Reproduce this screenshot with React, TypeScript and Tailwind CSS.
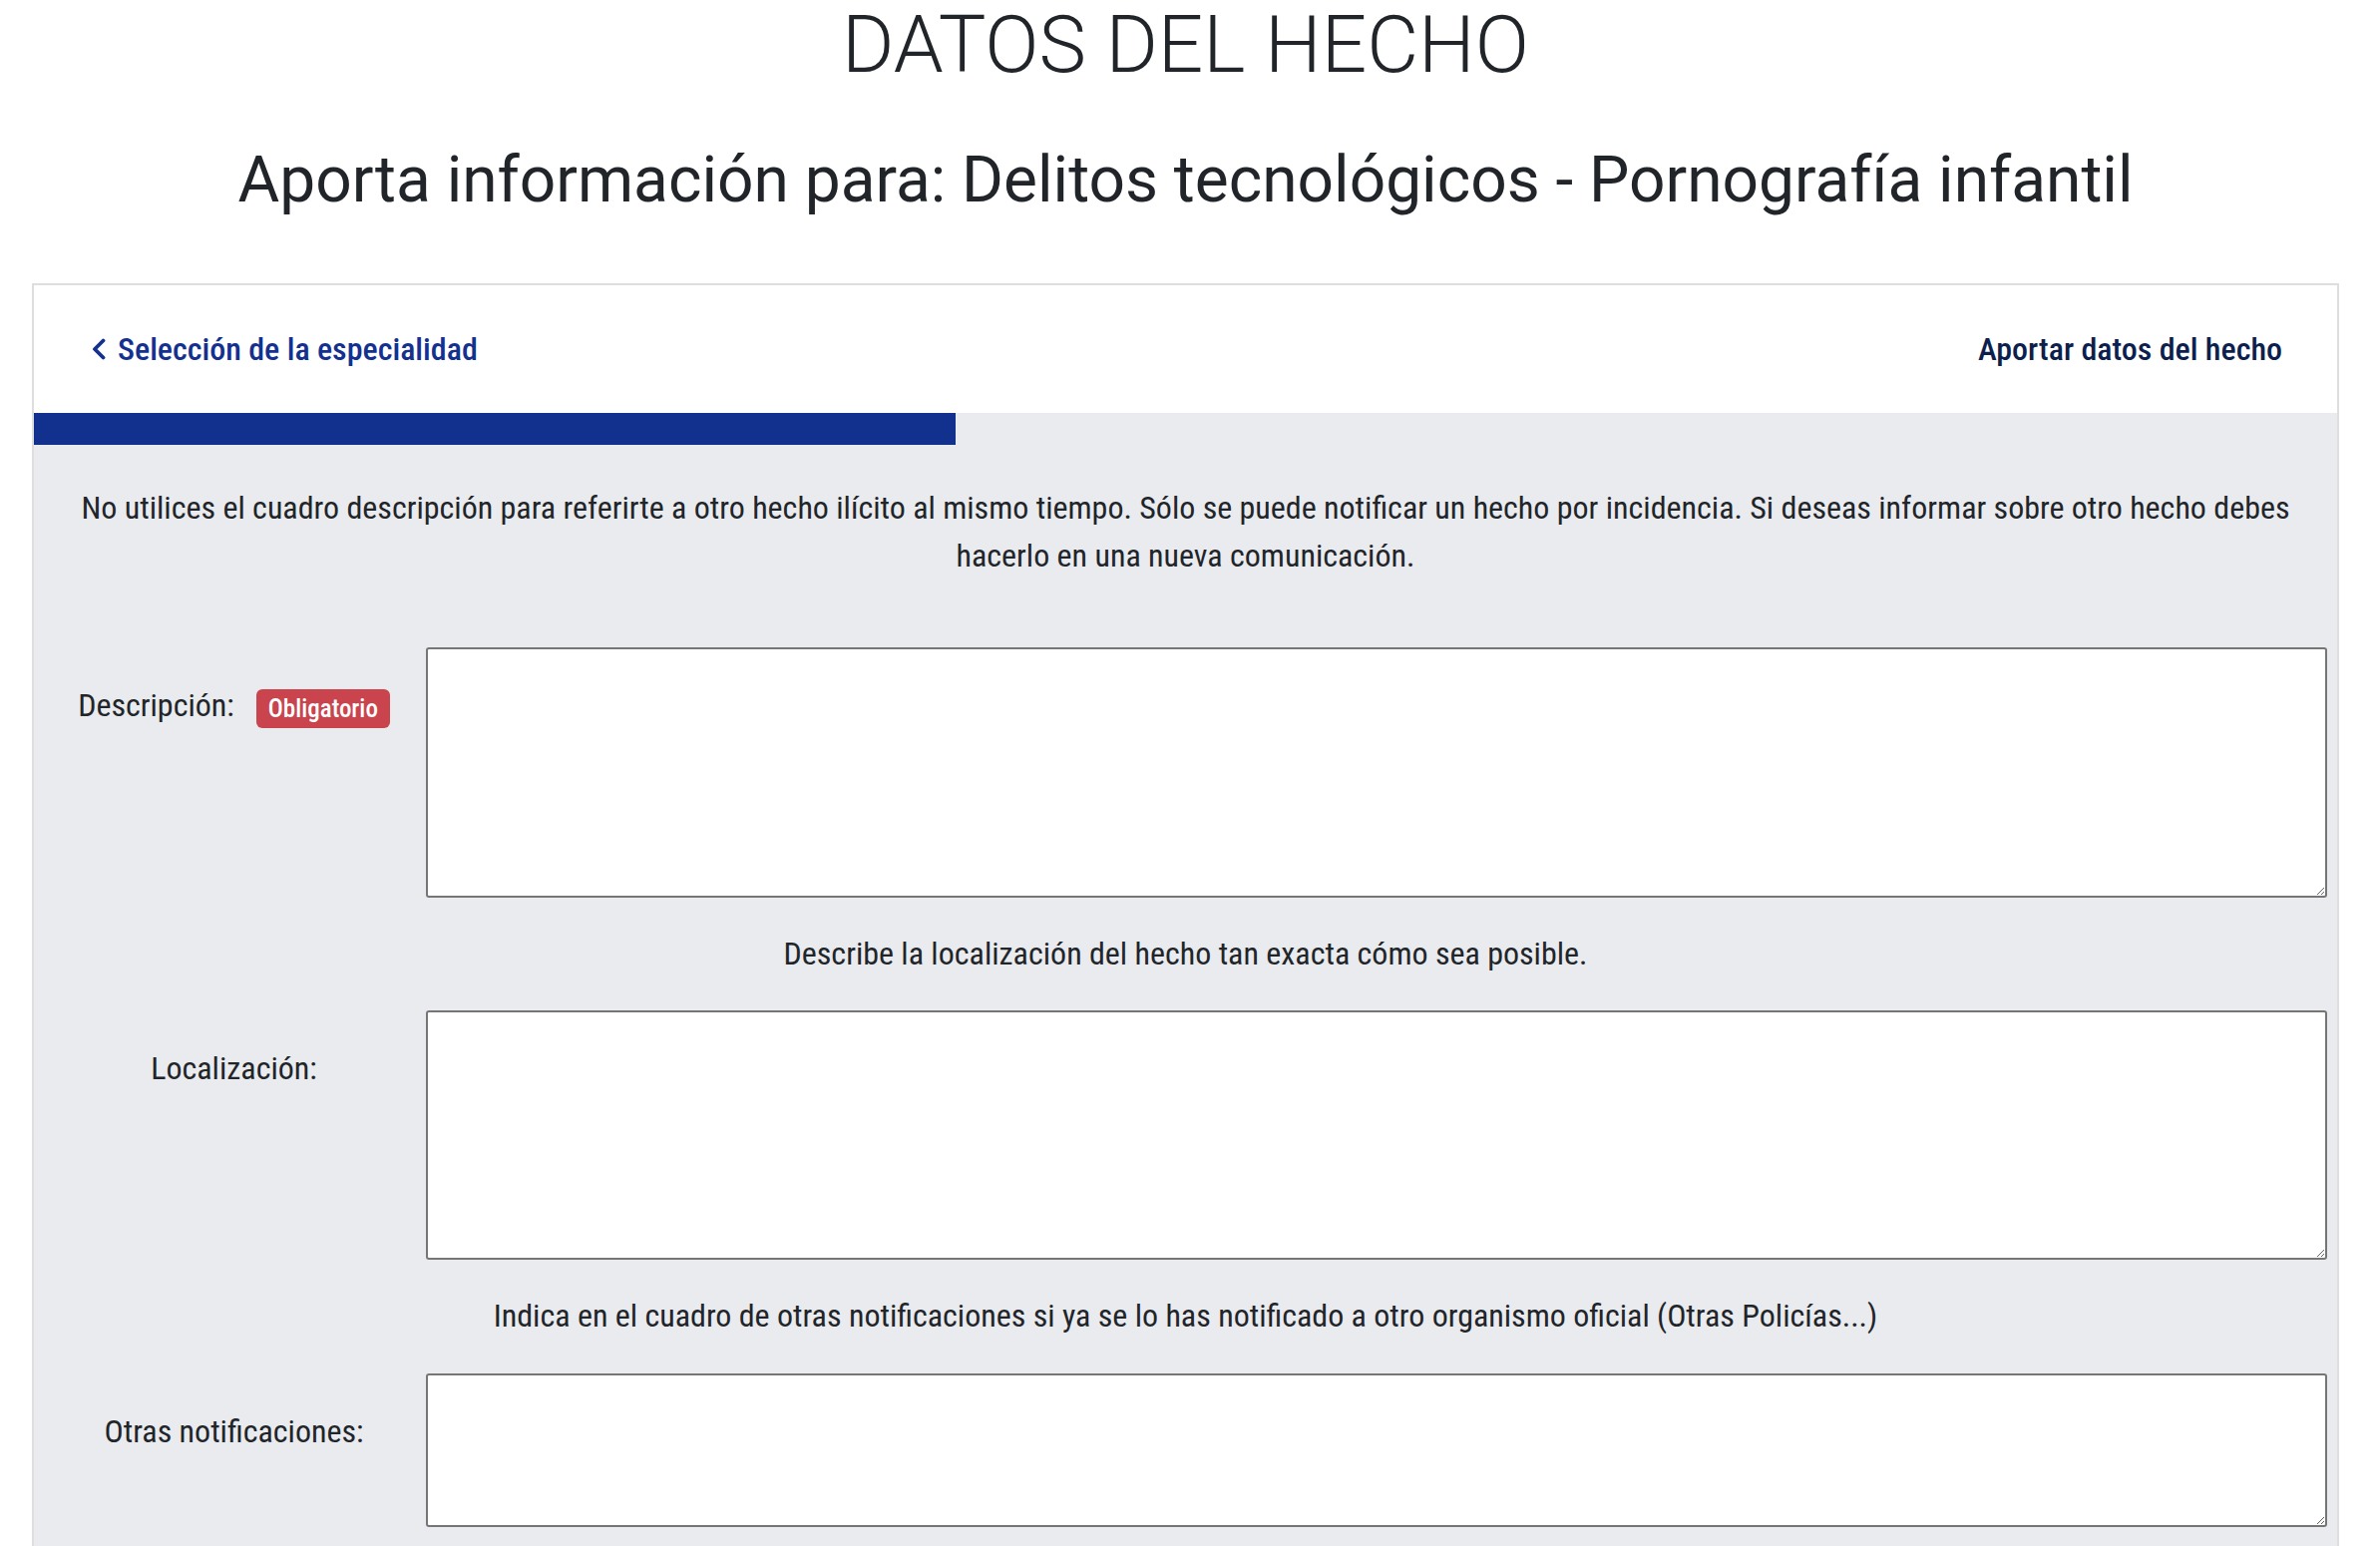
import React from "react";

function Label({ children }: { children: React.ReactNode }) {
  return (
    <div className="flex items-start justify-center pl-[8px] pt-[34px]">
      {children}
    </div>
  );
}

function Area({ h }: { h: string }) {
  return (
    <textarea
      className={`block w-full ${h} rounded-[3px] border-2 border-[#767676] bg-white`}
    />
  );
}

export default function App() {
  return (
    <div className="min-h-screen bg-white pl-[32px] pr-[41px] font-['Roboto',sans-serif] text-[#212529]">
      <h1 className="pt-[5px] text-center text-[80px] font-light leading-[80px]">
        DATOS DEL HECHO
      </h1>
      <h2 className="mt-[57px] text-center text-[64px] font-normal leading-[77px]">
        Aporta información para: Delitos tecnológicos - Pornografía infantil
      </h2>
      <div className="mt-[65px] border-2 border-b-0 border-[#dedede] font-['Roboto_Condensed','Liberation_Sans_Narrow','DejaVu_Sans_Condensed',sans-serif]">
        <div className="flex h-[128px] items-center justify-between bg-white pl-[58px] pr-[55px]">
          <a className="flex items-center gap-[12px] text-[32px] font-medium leading-[48px] text-[#14318f]">
            <svg width="14" height="22" viewBox="0 0 14 22" fill="none">
              <polyline points="11.5,2.5 3,11 11.5,19.5" stroke="#14318f" strokeWidth="3.8" strokeLinecap="round" strokeLinejoin="round" />
            </svg>
            <span>Selección de la especialidad</span>
          </a>
          <span className="text-[32px] font-medium leading-[48px] text-[#0c1f4d]">
            Aportar datos del hecho
          </span>
        </div>
        <div className="h-[32px] bg-[#e9ebef]">
          <div className="h-full w-[924px] bg-[#12318f]" />
        </div>
        <div className="bg-[#e9ebef] pb-[40px] pt-[39px] text-[32px] leading-[48px]">
          <p className="px-[30px] text-center">
            No utilices el cuadro descripción para referirte a otro hecho ilícito al mismo tiempo. Sólo se puede notificar un hecho por incidencia. Si deseas informar sobre otro hecho debes hacerlo en una nueva comunicación.
          </p>
          <div className="mt-[68px] grid grid-cols-[393px_1fr] pr-[10px]">
            <Label>
              <div className="flex items-center gap-[22px]">
                <span>Descripción:</span>
                <span className="mt-[6px] flex h-[39px] items-center rounded-[6px] bg-[#c9444d] px-[12px] text-[25px] font-medium leading-[39px] text-white">
                  Obligatorio
                </span>
              </div>
            </Label>
            <Area h="h-[251px]" />
          </div>
          <p className="mb-[33px] mt-[32px] text-center">
            Describe la localización del hecho tan exacta cómo sea posible.
          </p>
          <div className="grid grid-cols-[393px_1fr] pr-[10px]">
            <Label>
              <span>Localización:</span>
            </Label>
            <Area h="h-[250px]" />
          </div>
          <p className="mb-[34px] mt-[32px] text-center">
            Indica en el cuadro de otras notificaciones si ya se lo has notificado a otro organismo oficial (Otras Policías...)
          </p>
          <div className="grid grid-cols-[393px_1fr] pr-[10px]">
            <Label>
              <span>Otras notificaciones:</span>
            </Label>
            <Area h="h-[154px]" />
          </div>
        </div>
      </div>
    </div>
  );
}
